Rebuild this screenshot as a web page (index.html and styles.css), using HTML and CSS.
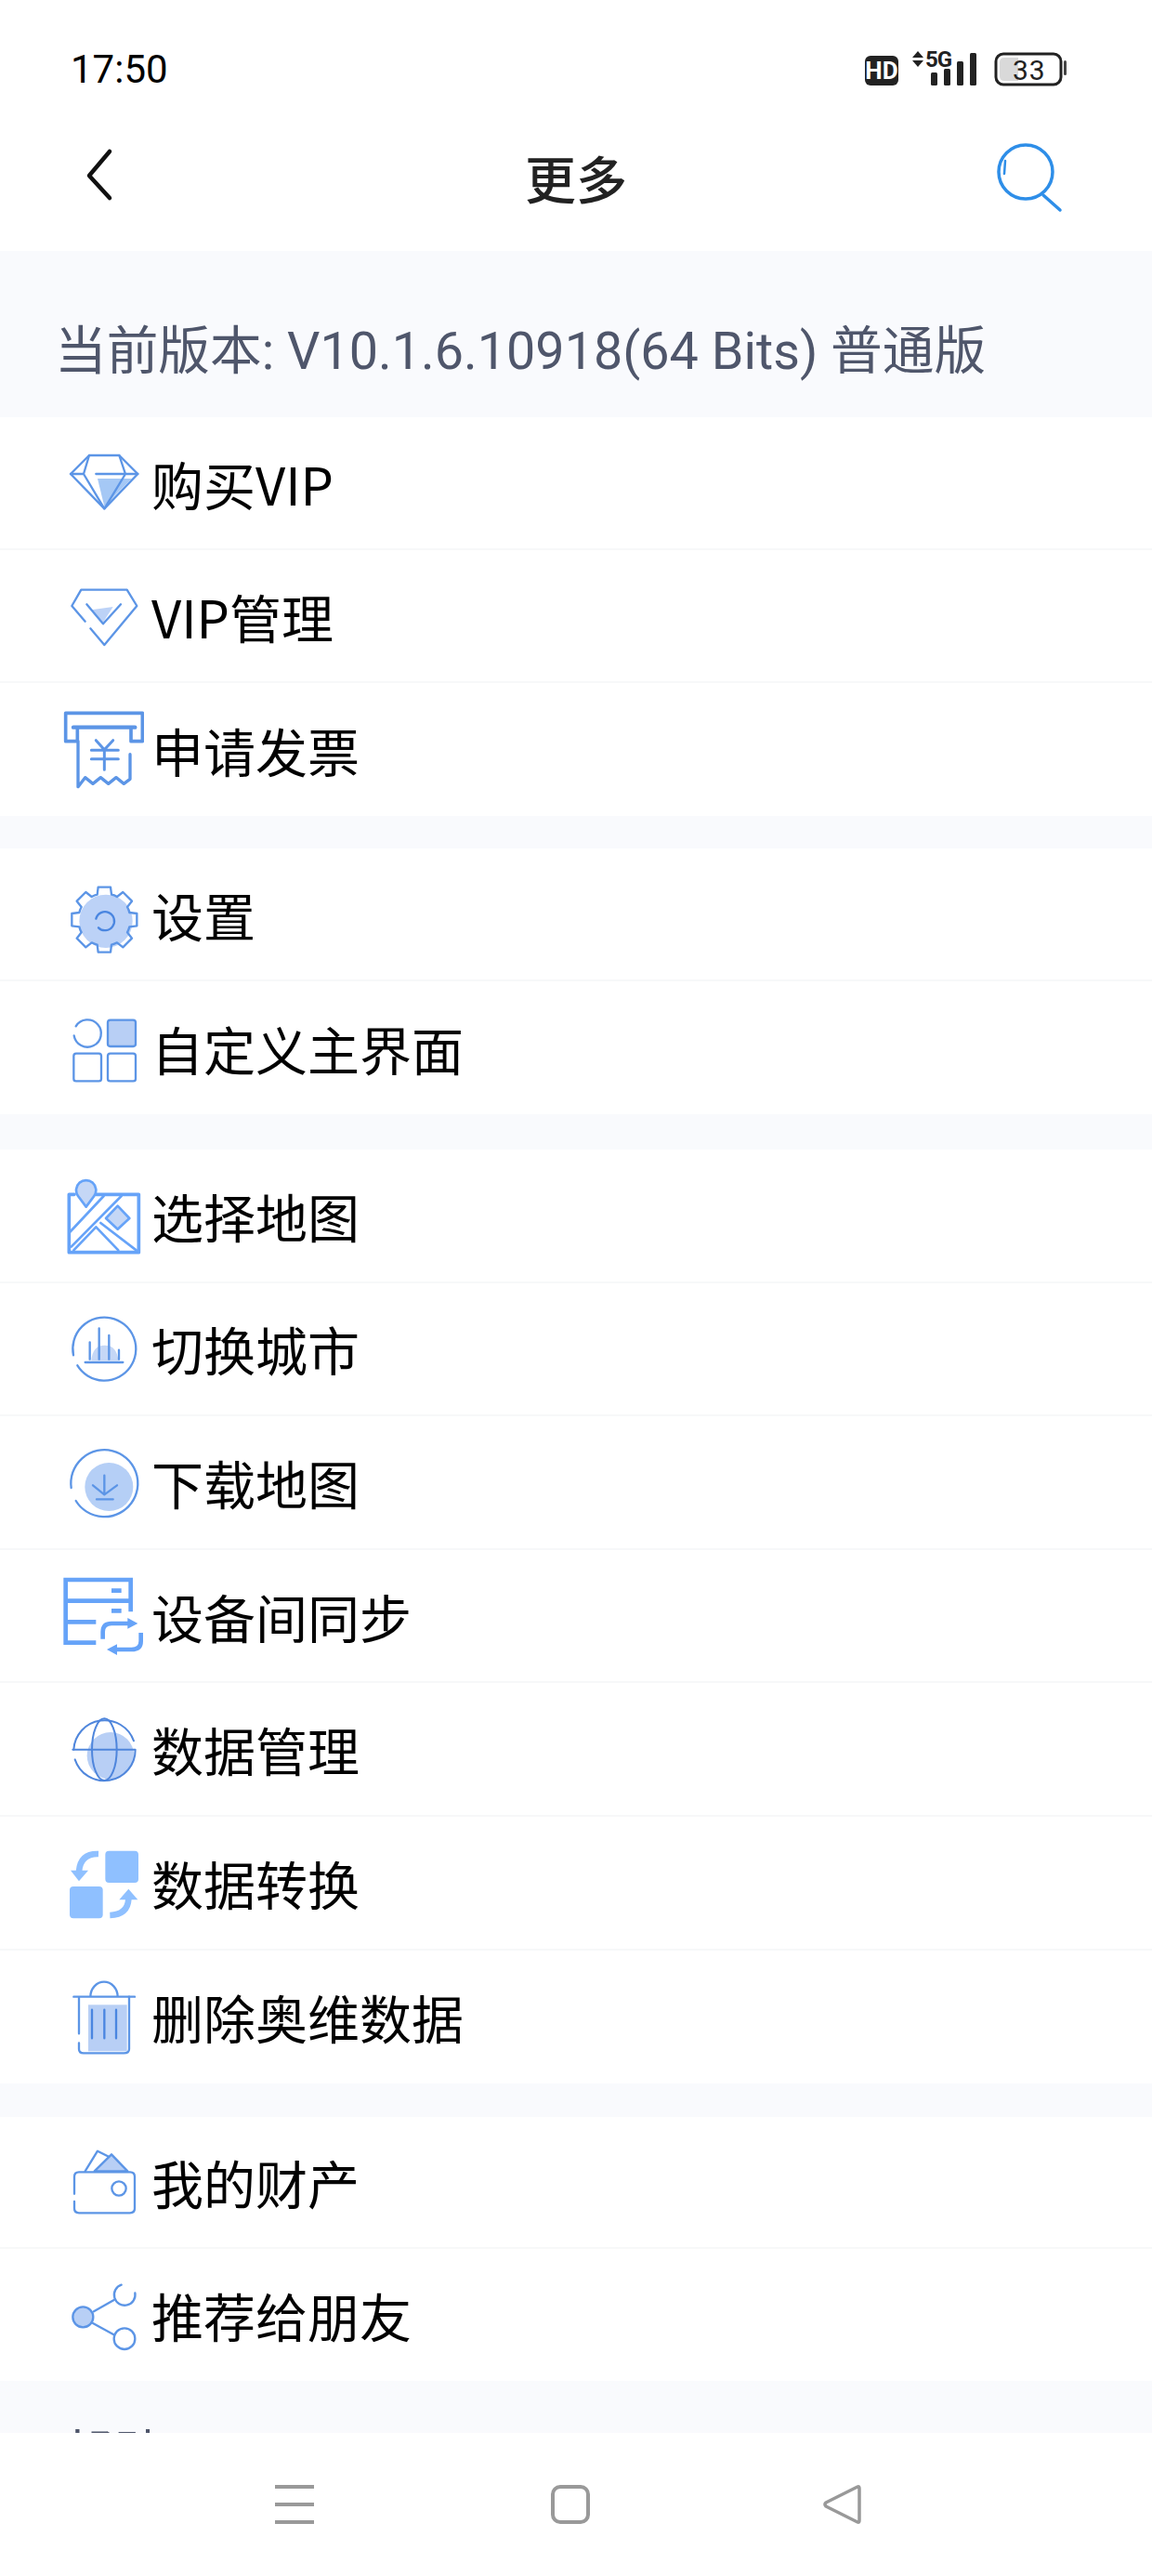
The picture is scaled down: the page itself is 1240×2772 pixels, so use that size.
FILE: index.html
```html
<!DOCTYPE html>
<html lang="zh-CN">
<head>
<meta charset="utf-8">
<title>更多</title>
<link rel="stylesheet" href="styles.css">
</head>
<body>
<div class="phone">
  <header class="top">
    <div class="status">
      <span class="time">17:50</span>
      <svg class="status-icons" viewBox="920 50 232 48" width="232" height="48">
        <rect x="931" y="60" width="36" height="32" rx="6" fill="#222"/>
        <text x="949" y="85" class="hd">HD</text>
        <polygon points="982,62 988,55 994,62" fill="#222"/>
        <polygon points="982,65 994,65 988,72" fill="#222"/>
        <text x="996" y="72" class="fiveg">5G</text>
        <rect x="1002" y="78" width="7" height="14" rx="1.5" fill="#222"/>
        <rect x="1016" y="74" width="7" height="18" rx="1.5" fill="#222"/>
        <rect x="1030" y="66" width="7" height="26" rx="1.5" fill="#222"/>
        <rect x="1044" y="57" width="7" height="35" rx="1.5" fill="#222"/>
        <rect x="1072" y="58" width="70" height="33" rx="8" fill="none" stroke="#222" stroke-width="3"/>
        <path d="M1081,62 H1096 V87 H1081 Q1076,87 1076,82 V67 Q1076,62 1081,62 Z" fill="#d9d9d9"/>
        <text x="1090" y="86" class="batt">33</text>
        <rect x="1145" y="65" width="3" height="16" rx="1.5" fill="#444"/>
      </svg>
    </div>
    <nav class="title-bar">
      <svg class="back" viewBox="0 0 36 60" width="36" height="60"><path d="M30,6 L8,32 L30,56" fill="none" stroke="#111" stroke-width="4.5" stroke-linecap="round" stroke-linejoin="round"/></svg>
      <h1 class="title">更多</h1>
      <svg class="search" viewBox="0 0 80 80" width="80" height="80">
        <circle cx="34" cy="32" r="29" fill="none" stroke="#2e8ee8" stroke-width="3.5"/>
        <path d="M53,57 L71,73" fill="none" stroke="#2e8ee8" stroke-width="3.5" stroke-linecap="round"/>
        <path d="M12,20 L11,34" fill="none" stroke="#2e8ee8" stroke-width="2.5" stroke-linecap="round"/>
      </svg>
    </nav>
  </header>

  <div class="section-head version">当前版本: V10.1.6.10918(64 Bits) 普通版</div>

  <section class="group">
    <div class="row">
      <svg class="ico" viewBox="45 60 300 300"><g class="s">
        <polygon points="195,195 305,195 217,285" fill="#a5c8f5" stroke="none"/>
        <polygon points="108,180 168,120 265,120 325,180 217,292"/>
        <path d="M168,120 L150,180 L217,292 L285,180 L265,120 M108,180 H150 M190,180 H325"/>
      </g></svg>
      <span class="label">购买VIP</span>
    </div>
    <div class="row">
      <svg class="ico" viewBox="45 490 300 300"><g class="s">
        <polygon points="175,620 245,610 213,660" fill="#bcd2f7" stroke="none"/>
        <path d="M155,657 L112,607 L142,555 H290 L322,607 L217,733 L172,680"/>
        <path d="M160,602 L213,665 L270,602"/>
      </g></svg>
      <span class="label">VIP管理</span>
    </div>
    <div class="row">
      <svg class="ico" viewBox="45 921 300 300"><g class="s s-invoice">
        <path d="M92,1043 V952 H340 V1043 H303 V1000 M92,1043 H130 V1000"/>
        <path d="M117,998 H316" stroke-width="13"/>
        <path d="M132,1043 V1190 L155,1160 L180,1180 L205,1160 L230,1180 L255,1160 L280,1180 L300,1165 V1085" stroke-width="10"/>
        <path d="M190,1040 L217,1070 L245,1040 M175,1072 H262 M175,1100 H262 M217,1070 V1135" stroke-width="9"/>
      </g></svg>
      <span class="label">申请发票</span>
    </div>
  </section>

  <div class="gap gap-a"></div>

  <section class="group">
    <div class="row">
      <svg class="ico" viewBox="45 238 300 300">
        <circle cx="222" cy="410" r="86" fill="#bcd2f7"/>
        <g class="s" transform="translate(217 405)">
          <path d="M20,-105 L23,-81 Q32,-80 41,-74 L60,-89 L89,-60 L74,-41 Q79,-32 81,-23 L105,-20 V20 L81,23 Q79,32 74,41 L89,60 L60,89 L41,74 Q32,79 23,81 L20,105 H-20 L-23,81 Q-32,79 -41,74 L-60,89 L-89,60 L-74,41 Q-79,32 -81,23 L-105,20 V-20 L-81,-23 Q-79,-32 -74,-41 L-89,-60 L-60,-89 L-41,-74 Q-32,-79 -23,-81 L-20,-105 Z"/>
        </g>
        <path class="s-dark" d="M190,402 A30,30 0 1 1 198,431"/>
      </svg>
      <span class="label">设置</span>
    </div>
    <div class="row">
      <svg class="ico" viewBox="45 681 300 300"><g class="s">
        <path d="M125,760 A44,44 0 1 1 119,790"/>
        <rect x="228" y="740" width="90" height="85" rx="8" fill="#b8cff5"/>
        <rect x="118" y="848" width="89" height="89" rx="8"/>
        <rect x="228" y="848" width="90" height="89" rx="8"/>
      </g></svg>
      <span class="label">自定义主界面</span>
    </div>
  </section>

  <div class="gap gap-b"></div>

  <section class="group group-long">
    <div class="row">
      <svg class="ico" viewBox="45 21 300 300"><g class="s s-map">
        <path d="M120,103 H103 V290 H328 V103 H190"/>
        <path d="M108,222 L215,108 M110,272 L272,108 M118,283 L190,208 L262,283 M205,195 L320,283" stroke-width="8"/>
        <polygon points="222,180 260,140 298,180 260,215" fill="#c5d7f6" stroke-width="8"/>
        <path d="M158,143 L132,108 A32,32 0 1 1 184,108 Z" fill="#c5d7f6" stroke-width="8"/>
      </g></svg>
      <span class="label">选择地图</span>
    </div>
    <div class="row">
      <svg class="ico" viewBox="45 450 300 300">
        <path d="M175,640 Q178,590 218,590 Q258,590 262,640 Z" fill="#c5d7f6"/>
        <g class="s">
          <path d="M117,622 A102,102 0 1 1 130,655"/>
          <path d="M155,645 H277"/>
          <path d="M170,580 V635 M200,535 V635 M232,558 V635 M264,605 V635"/>
        </g>
      </svg>
      <span class="label">切换城市</span>
    </div>
    <div class="row">
      <svg class="ico" viewBox="45 882 300 300">
        <circle cx="232" cy="1047" r="78" fill="#b5cff6"/>
        <g class="s">
          <path d="M110,1050 A108,108 0 1 1 125,1092"/>
          <path d="M217,1010 V1070 M180,1042 L217,1072 L258,1042 M192,1087 H245"/>
        </g>
      </svg>
      <span class="label">下载地图</span>
    </div>
    <div class="row">
      <svg class="ico" viewBox="45 114 300 300"><g class="s s-sync">
        <path d="M190,350 H92 V147 H302 V250"/>
        <path d="M92,215 H302 M92,283 H190"/>
        <path d="M240,182 H272 M240,247 H272"/>
        <path d="M212,338 V315 Q212,288 240,288 H295 M335,318 V345 Q335,372 305,372 H255"/>
        <polygon points="292,270 325,288 292,305" fill="#66a3f8" stroke="none"/>
        <polygon points="258,355 225,372 258,390" fill="#66a3f8" stroke="none"/>
      </g></svg>
      <span class="label">设备间同步</span>
    </div>
    <div class="row">
      <svg class="ico" viewBox="45 546 300 300">
        <circle cx="237" cy="718" r="76" fill="#b8cff5"/>
        <g class="s s-thin">
          <path d="M118,698 A100,100 0 0 1 312,670"/>
          <path d="M122,730 A100,100 0 0 0 317,698 H115"/>
          <ellipse cx="217" cy="698" rx="40" ry="100"/>
        </g>
      </svg>
      <span class="label">数据管理</span>
    </div>
    <div class="row">
      <svg class="ico" viewBox="45 975 300 300">
        <g fill="#8fc0ff">
          <rect x="220" y="1022" width="107" height="103" rx="12"/>
          <rect x="105" y="1137" width="107" height="103" rx="12"/>
          <polygon points="108,1085 165,1085 135,1120"/>
          <polygon points="265,1180 325,1180 295,1145"/>
        </g>
        <path class="s-solid" d="M198,1032 Q140,1030 135,1088"/>
        <path class="s-solid" d="M235,1230 Q292,1228 295,1178"/>
      </svg>
      <span class="label">数据转换</span>
    </div>
    <div class="row">
      <svg class="ico" viewBox="45 210 300 300">
        <rect x="165" y="322" width="125" height="150" fill="#b8cff5"/>
        <g class="s">
          <path d="M118,296 H315 M172,296 A44,48 0 0 1 260,296"/>
          <path d="M135,300 V415 M135,445 V465 Q135,478 150,478 H280 Q297,478 297,465 V296"/>
        </g>
        <path class="s-dark" d="M177,338 V430 M217,338 V430 M255,338 V430"/>
      </svg>
      <span class="label">删除奥维数据</span>
    </div>
  </section>

  <div class="gap gap-c"></div>

  <section class="group">
    <div class="row row-short">
      <svg class="ico" viewBox="45 747 300 300"><g class="s">
        <path d="M155,862 L195,797 L240,820"/>
        <path d="M185,862 L240,808 L292,862 Z" fill="#b8cff5"/>
        <path d="M120,935 V880 Q120,865 135,865 H300 Q315,865 315,880 V982 Q315,997 300,997 H135 Q120,997 120,982 V960"/>
        <circle cx="264" cy="918" r="23"/>
      </g></svg>
      <span class="label">我的财产</span>
    </div>
    <div class="row row-short">
      <svg class="ico" viewBox="45 1173 300 300"><g class="s">
        <circle cx="148" cy="1330" r="33" fill="#b8cff5"/>
        <circle cx="282" cy="1400" r="34"/>
        <path d="M272,1226 A34,34 0 1 0 316,1252"/>
        <path d="M183,1312 L248,1275 M180,1350 L250,1388"/>
      </g></svg>
      <span class="label">推荐给朋友</span>
    </div>
  </section>

  <div class="section-head help">帮助</div>

  <footer class="nav">
    <div class="nav-menu"><i></i><i></i><i></i></div>
    <div class="nav-home"></div>
    <svg class="nav-back" viewBox="0 0 44 44" width="44" height="44"><path d="M38,3 Q40,2 40,5 V39 Q40,42 38,41 L4,24 Q2,22 4,20 Z" fill="none" stroke="#999" stroke-width="3.5" stroke-linejoin="round"/></svg>
  </footer>
</div>
</body>
</html>
```
FILE: styles.css
```css
* { box-sizing: border-box; }
html, body { margin: 0; padding: 0; background: #fff; }
body { font-family: "Noto Sans CJK SC", Roboto, sans-serif; color: #000; }
.phone { position: relative; width: 1240px; height: 2772px; overflow: hidden; background: #fff; }

.top { height: 270px; display: flex; flex-direction: column; }
.status { height: 120px; padding: 52px 0 0 76px; display: flex; justify-content: space-between; align-items: flex-start; }
.time { font-family: Roboto, sans-serif; font-size: 42px; line-height: 48px; color: #000; margin-top: -1px; }
.status-icons { margin: -2px 88px 0 0; }
.hd { font-family: Roboto, sans-serif; font-size: 26px; font-weight: 700; fill: #fff; text-anchor: middle; }
.fiveg { font-family: Roboto, sans-serif; font-size: 24px; font-weight: 700; fill: #222; letter-spacing: -1px; }
.batt { font-family: Roboto, sans-serif; font-size: 30px; fill: #222; letter-spacing: 1px; }

.title-bar { position: relative; flex: 1; display: flex; align-items: center; justify-content: space-between; padding: 0 90px 0 88px; }
.back { margin-top: -16px; }
.title { position: absolute; left: 0; right: 0; top: 31px; margin: 0; text-align: center; font-size: 55px; line-height: 78px; font-weight: 500; color: #222; }
.search { margin-top: -4px; }

.section-head { background: #f9fafd; color: #4f566b; font-family: Roboto, "Noto Sans CJK SC", sans-serif; font-size: 55.7px; padding-left: 59px; }
.version { height: 179px; padding-top: 70px; line-height: 76px; }
.help { height: 56px; padding-left: 66px; padding-top: 42px; line-height: 76px; overflow: visible; white-space: nowrap; }

.group { background: #fff; }
.row { height: 143px; display: flex; align-items: center; padding-left: 55px; border-bottom: 2px solid #f7f8f9; }
.row:last-child { border-bottom: 0; }
.group-long .row { height: 143.6px; }
.row-short { height: 142px; }
.ico { width: 100px; height: 100px; flex: none; margin-right: 9px; }
.label { font-size: 56px; line-height: 80px; color: #000; margin-left: -1px; }
.gap { background: #f9fafd; }
.gap-a { height: 35px; }
.gap-b { height: 38px; }
.gap-c { height: 36px; }

.s { fill: none; stroke: #5c95e6; stroke-width: 7; stroke-linecap: round; stroke-linejoin: round; }
.s-thin { stroke-width: 6; stroke: #4f86dc; }
.s-invoice { stroke-width: 11; }
.s-map { stroke-width: 11; stroke: #66a3f8; }
.s-sync { stroke-width: 14; stroke: #66a3f8; stroke-linecap: butt; stroke-linejoin: miter; }
.s-dark { fill: none; stroke: #4a86e0; stroke-width: 7; stroke-linecap: round; }
.s-solid { fill: none; stroke: #8fc0ff; stroke-width: 20; }

.nav { position: absolute; left: 0; right: 0; bottom: 0; height: 154px; background: #fff; }
.nav-menu { position: absolute; left: 296px; top: 56px; width: 42px; height: 42px; display: flex; flex-direction: column; justify-content: space-between; }
.nav-menu i { display: block; height: 4px; background: #999; }
.nav-home { position: absolute; left: 593px; top: 56px; width: 42px; height: 42px; border: 4px solid #999; border-radius: 10px; }
.nav-back { position: absolute; left: 885px; top: 55px; }
```
